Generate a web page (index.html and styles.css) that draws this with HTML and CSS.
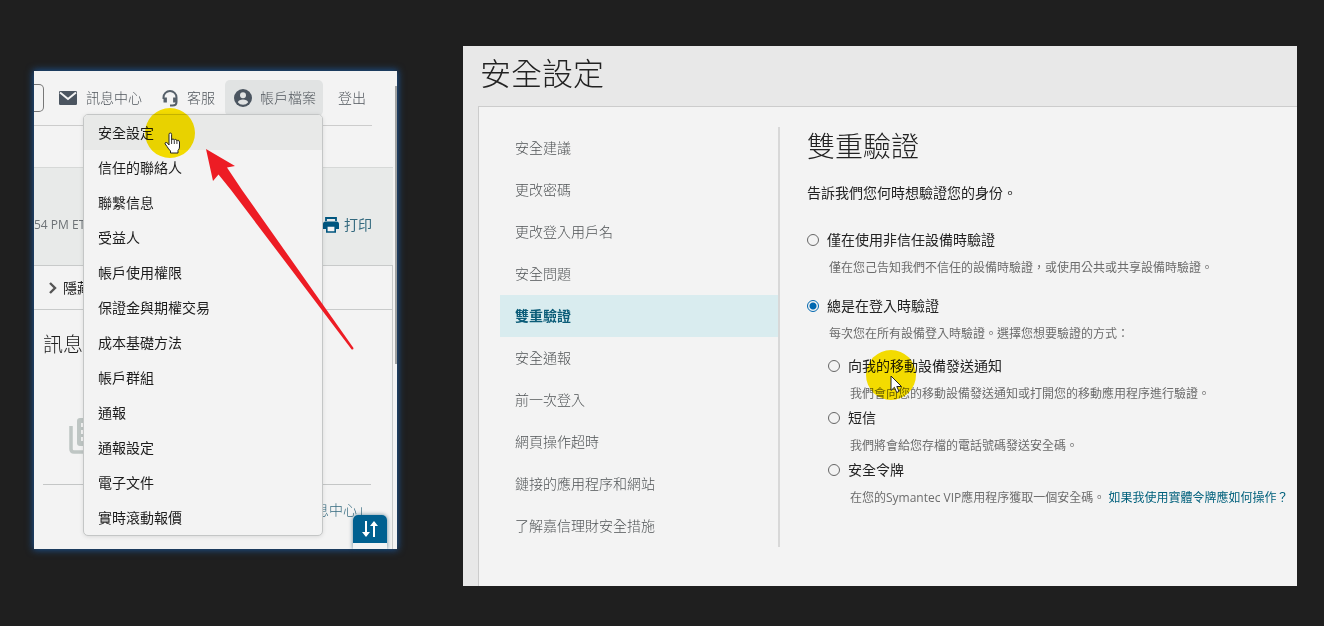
FILE: index.html
```html
<!DOCTYPE html>
<html lang="zh-TW">
<head>
<meta charset="UTF-8" />
<meta name="viewport" content="width=device-width, initial-scale=1" />
<title>安全設定</title>
<link rel="stylesheet" href="styles.css">
</head>
<body>
<div class="stage">

  <!-- 帳戶頁面與選單 -->
  <section class="account">
    <header class="topbar">
      <input class="search" type="text" aria-label="搜尋">
      <a class="top-link messages" href="#">
        <svg width="18" height="14" viewBox="0 0 18 14"><path d="M0 1.2Q0 0 1.2 0h15.600Q18 0 18 1.200v11.600Q18 14 16.800 14H1.200Q0 14 0 12.800z" fill="#4b5560"/><path d="M1 1.500l8 6.500 8-6.500" fill="none" stroke="#f3f3f3" stroke-width="2"/></svg>
        訊息中心
      </a>
      <a class="top-link service" href="#">
        <svg width="16" height="17" viewBox="0 0 16 17" fill="none" stroke="#56606a"><path d="M1.500 9V7.500a6.500 6.500 0 0 1 13 0V12q0 3.500-4 3.500H8" stroke-width="2"/><path d="M3.200 7.500v5M12.800 7.500v5" stroke-width="3.400"/></svg>
        客服
      </a>
      <div class="profile">
        <button class="profile-btn" type="button">
          <svg width="18" height="18" viewBox="0 0 18 18"><circle cx="9" cy="9" r="9" fill="#4b5560"/><circle cx="9" cy="6.200" r="3" fill="#e1e3e3"/><path d="M3.800 13.200q1.200-2.700 5.200-2.700t5.200 2.700Q12.300 15.800 9 15.800t-5.200-2.600z" fill="#e1e3e3"/></svg>
          帳戶檔案
        </button>
        <ul class="menu">
          <li><a class="current" href="#">安全設定</a></li>
          <li><a href="#">信任的聯絡人</a></li>
          <li><a href="#">聯繫信息</a></li>
          <li><a href="#">受益人</a></li>
          <li><a href="#">帳戶使用權限</a></li>
          <li><a href="#">保證金與期權交易</a></li>
          <li><a href="#">成本基礎方法</a></li>
          <li><a href="#">帳戶群組</a></li>
          <li><a href="#">通報</a></li>
          <li><a href="#">通報設定</a></li>
          <li><a href="#">電子文件</a></li>
          <li><a href="#">實時滾動報價</a></li>
        </ul>
      </div>
      <a class="top-link logout" href="#">登出</a>
    </header>

    <div class="status">
      <span class="time">54 PM ET,</span>
      <a class="print" href="#">
        <svg width="16" height="16" viewBox="0 0 16 16"><path d="M3 4V1h10v3" fill="none" stroke="#00567f" stroke-width="1.800"/><path d="M2.500 4.500h11Q16 4.500 16 7v5h-3V9.500H3V12H0V7q0-2.500 2.500-2.500z" fill="#00567f"/><path d="M3.800 9v6h8.400V9z" fill="#f3f3f3" stroke="#00567f" stroke-width="1.600"/></svg>
        打印
      </a>
    </div>

    <div class="panel">
      <button class="collapse" type="button">
        <svg width="8" height="12" viewBox="0 0 8 12"><path d="M1 1l5 5-5 5" fill="none" stroke="#555" stroke-width="2.400"/></svg>
        隱藏
      </button>
      <div class="news">
        <h2>訊息</h2>
        <svg class="docs" width="38" height="36" viewBox="0 0 38 36"><path d="M2 8v23q0 3 3 3h24" fill="none" stroke="#bfc6c4" stroke-width="3.500"/><rect x="8" y="0" width="29" height="28" rx="3" fill="#bfc6c4"/><path d="M12 5h4v4h-4zM12 12h4v4h-4zM12 19h4v4h-4z" fill="#f3f3f3"/></svg>
        <a class="news-link" href="#">訊息中心」</a>
      </div>
    </div>

    <div class="scroll-thumb"></div>
    <div class="trade">
      <button type="button" aria-label="交易">
        <svg width="16" height="18" viewBox="0 0 16 18"><path d="M4 1v13M12 17V4" stroke="#fff" stroke-width="2"/><path d="M0 12l4 5 4-5zM8 6l4-5 4 5z" fill="#fff"/></svg>
      </button>
    </div>

    <div class="spot spot-menu"></div>
    <svg class="hand" width="17" height="22" viewBox="0 0 17 22"><path d="M5 13V2.500Q5 1 6.300 1T7.600 2.500V8q.3-1 1.400-1t1.300 1.300q.3-.9 1.300-.9t1.300 1.500q.3-.7 1.200-.7T15.500 10v5q0 2-1.500 3.500V21H6.500v-2Q4.500 17 3 14.500L1.200 12Q.6 10.800 1.600 10.500T4 11.600z" fill="#fff" stroke="#222"/><path d="M7.600 8v4M10.300 8.500V12M12.900 9v3" stroke="#222" stroke-width=".9"/></svg>
    <svg class="arrow" width="150" height="202" viewBox="0 0 150 202"><path d="M1 0L30 17l-8 1.500L37 41 148.500 199q0 2-1.800 1.500L26 41 13.500 25.500 8 32z" fill="#ed1c24"/></svg>
  </section>

  <!-- 安全設定頁 -->
  <section class="security">
    <h1>安全設定</h1>
    <div class="card">
      <nav class="side">
        <a href="#">安全建議</a>
        <a href="#">更改密碼</a>
        <a href="#">更改登入用戶名</a>
        <a href="#">安全問題</a>
        <a class="active" href="#">雙重驗證</a>
        <a href="#">安全通報</a>
        <a href="#">前一次登入</a>
        <a href="#">網頁操作超時</a>
        <a href="#">鏈接的應用程序和網站</a>
        <a href="#">了解嘉信理財安全措施</a>
      </nav>
      <form class="verify">
        <h2>雙重驗證</h2>
        <p class="intro">告訴我們您何時想驗證您的身份。</p>
        <div class="option">
          <input type="radio" name="when" id="untrusted">
          <label for="untrusted">僅在使用非信任設備時驗證</label>
          <p>僅在您己告知我們不信任的設備時驗證，或使用公共或共享設備時驗證。</p>
        </div>
        <div class="option">
          <input type="radio" name="when" id="always" checked>
          <label for="always">總是在登入時驗證</label>
          <p>每次您在所有設備登入時驗證。選擇您想要驗證的方式：</p>
        </div>
        <div class="methods">
          <div class="option">
            <input type="radio" name="method" id="push">
            <label for="push">向我的移動設備發送通知</label>
            <p>我們會向您的移動設備發送通知或打開您的移動應用程序進行驗證。</p>
          </div>
          <div class="option">
            <input type="radio" name="method" id="sms">
            <label for="sms">短信</label>
            <p>我們將會給您存檔的電話號碼發送安全碼。</p>
          </div>
          <div class="option">
            <input type="radio" name="method" id="token">
            <label for="token">安全令牌</label>
            <p>在您的Symantec VIP應用程序獲取一個安全碼。 <a href="#">如果我使用實體令牌應如何操作？</a></p>
          </div>
        </div>
      </form>
    </div>
    <div class="spot spot-push"></div>
    <svg class="pointer" width="13" height="19" viewBox="0 0 13 19"><path d="M1 1v14.500l3.400-3.200 2.300 5.200 2.300-1-2.200-5H11.500z" fill="#fff" stroke="#222"/></svg>
  </section>

</div>
</body>
</html>
```
FILE: styles.css
```css
* {
  box-sizing: border-box;
}
body {
  margin: 0;
  background: #1f1f1f;
  color: #222;
  font-family: "Open Sans", "Noto Sans CJK TC", sans-serif;
  font-size: 14px;
  line-height: 20px;
  overflow-x: hidden;
}
h1, h2, p, ul {
  margin: 0;
  padding: 0;
  font-weight: 300;
}
a {
  color: inherit;
  text-decoration: none;
}
button {
  font: inherit;
  color: inherit;
  border: none;
  background: none;
  padding: 0;
  cursor: pointer;
}
svg {
  flex: none;
}
.stage {
  display: grid;
  grid-template-columns: minmax(0, 363fr) minmax(0, 834fr);
  align-items: start;
  gap: 66px;
  padding: 46px 27px 40px 34px;
}

/* account page */
.account {
  position: relative;
  margin-top: 25px;
  background: #f3f3f3;
  box-shadow: 0 0 7px 1px #1c5392;
}
.topbar {
  display: flex;
  align-items: center;
  height: 55px;
  margin-right: 25px;
  border-bottom: 1px solid #ccc;
  color: #50565c;
  font-weight: 300;
}
.search {
  width: 10px;
  height: 28px;
  padding: 0;
  border: 1px solid #777;
  border-left: none;
  border-radius: 0 5px 5px 0;
  background: #f3f3f3;
}
.top-link {
  display: flex;
  align-items: center;
  gap: 9px;
  white-space: nowrap;
}
.messages {
  margin-left: 15px;
}
.service {
  margin-left: 20px;
}
.logout {
  margin-left: 15px;
}
.profile {
  position: relative;
  margin-left: 10px;
}
.profile-btn {
  display: flex;
  align-items: center;
  gap: 8px;
  height: 36px;
  padding: 0 7px 0 9px;
  border-radius: 5px;
  background: #e1e3e3;
  white-space: nowrap;
}
.menu {
  position: absolute;
  z-index: 2;
  top: 34px;
  right: 0;
  width: 240px;
  list-style: none;
  background: #f3f3f3;
  border: 1px solid #c4c6c6;
  border-radius: 5px;
  box-shadow: 0 1px 4px rgba(0, 0, 0, 0.1);
  overflow: hidden;
}
.menu a {
  display: block;
  padding: 0 14px;
  line-height: 35px;
  color: #1c1c1c;
  font-weight: 400;
}
.menu .current {
  background: #e8e9e8;
}
.status {
  display: flex;
  align-items: center;
  justify-content: space-between;
  height: 98px;
  margin: 41px 4px 0 0;
  padding: 16px 21px 0 0;
  background: #e8eae9;
  border-top: 1px solid #d6d8d7;
}
.time {
  font-size: 12px;
  color: #6d7276;
}
.print {
  display: flex;
  align-items: center;
  gap: 5px;
  color: #33697e;
}
.panel {
  margin-right: 4px;
  border: 1px solid #c8caca;
  border-left: none;
  border-bottom: none;
}
.collapse {
  display: flex;
  align-items: center;
  gap: 6px;
  width: 100%;
  height: 44px;
  padding-left: 15px;
  border-bottom: 1px solid #c8caca;
}
.news {
  display: flex;
  flex-direction: column;
  padding: 20px 21px 29px 9px;
}
.news h2 {
  font-size: 20px;
  line-height: 30px;
}
.docs {
  margin: 58px 0 30px 26px;
}
.news-link {
  padding-top: 15px;
  border-top: 1px solid #c4c6c6;
  color: #33697e;
  text-align: right;
  font-weight: 300;
}
.scroll-thumb {
  position: absolute;
  top: 15px;
  right: 0;
  width: 2px;
  height: 278px;
  background: #a0a2a2;
}
.trade {
  position: absolute;
  right: 10px;
  bottom: 0;
  width: 34px;
  height: 34px;
  border-radius: 5px 5px 0 0;
  background: #f3f3f3;
  box-shadow: 0 0 4px rgba(0, 60, 90, 0.6);
  overflow: hidden;
}
.trade button {
  display: flex;
  align-items: center;
  justify-content: center;
  width: 100%;
  height: 28px;
  background: #006090;
}

/* pointer highlights */
.spot {
  position: absolute;
  z-index: 3;
  width: 50px;
  height: 50px;
  border-radius: 50%;
  background: #ffe600;
  mix-blend-mode: multiply;
}
.spot-menu {
  left: 111px;
  top: 37px;
}
.spot-push {
  left: 403px;
  top: 304px;
}
.hand, .arrow, .pointer {
  position: absolute;
  z-index: 4;
}
.hand {
  left: 130px;
  top: 61px;
}
.arrow {
  left: 171px;
  top: 78px;
}
.pointer {
  left: 427px;
  top: 329px;
}

/* security settings */
.security {
  position: relative;
  padding-left: 15px;
  background: #e8e8e8;
}
.security h1 {
  padding: 7px 0 13px 2px;
  font-size: 31px;
  line-height: 40px;
}
.card {
  display: grid;
  grid-template-columns: minmax(0, 280fr) minmax(0, 517fr);
  padding: 20px 0 39px 21px;
  background: #f3f3f3;
  border: 1px solid #ccc;
  border-right: none;
  border-bottom: none;
}
.side {
  border-right: 2px solid #d8d8d8;
}
.side a {
  display: block;
  padding-left: 15px;
  line-height: 42px;
  color: #505456;
  font-weight: 300;
}
.side .active {
  background: #d9ecef;
  color: #0b5c78;
  font-weight: 700;
}
.verify {
  padding-left: 27px;
}
.verify h2 {
  font-size: 28px;
  line-height: 38px;
}
.intro {
  margin: 18px 0 27px;
  font-weight: 400;
}
.option {
  display: grid;
  grid-template-columns: 12px 1fr;
  column-gap: 8px;
  align-items: center;
}
.option + .option {
  margin-top: 19px;
}
.option input {
  appearance: none;
  width: 12px;
  height: 12px;
  margin: 0;
  border: 1px solid #666;
  border-radius: 50%;
}
.option input:checked {
  border-color: #0067b0;
  background: radial-gradient(circle, #0067b0 3px, #f3f3f3 4px);
}
.option p {
  grid-column: 2;
  margin-top: 9px;
  padding-left: 2px;
  font-size: 12px;
  line-height: 18px;
  font-weight: 400;
  color: #6c6c6c;
  white-space: nowrap;
}
.option p a {
  color: #00607c;
}
.methods {
  margin: 13px 0 0 21px;
}
.methods .option + .option {
  margin-top: 5px;
}
```
